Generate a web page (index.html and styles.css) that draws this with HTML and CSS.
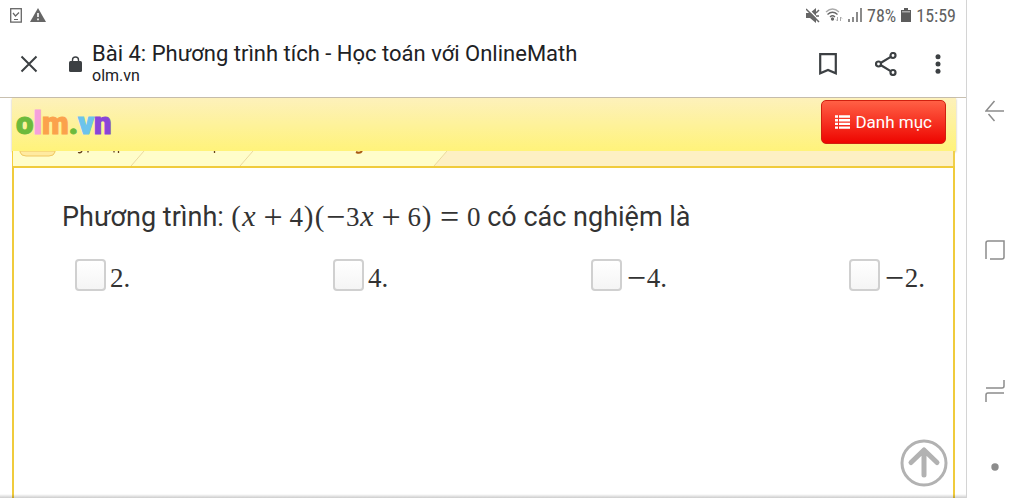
FILE: index.html
```html
<!DOCTYPE html>
<html lang="vi">
<head>
  <meta charset="UTF-8">
  <title>Bài 4: Phương trình tích - Học toán với OnlineMath</title>
  <meta name="viewport" content="width=device-width, initial-scale=1.0">
  <link rel="stylesheet" href="styles.css">
</head>
<body>
  <div class="screen">
    <div class="status">
      <svg width="12" height="15" viewBox="0 0 12 15" fill="none" stroke="#666"><rect x=".7" y=".7" width="10.6" height="13.4" stroke-width="1.3"/><path d="M3 5l2.5 3L9 4.500M4 11.500h4" stroke-width="1.200"/></svg>
      <svg width="16" height="14" viewBox="0 0 16 14"><path d="M8 0l8 14H0z" fill="#666"/><path d="M8 5v4M8 10.500v1.700" stroke="#fff" stroke-width="1.600"/></svg>
      <div class="status-right">
        <svg width="14" height="15" viewBox="0 0 14 15"><path d="M0 5h4l6-5v15l-6-5H0z" fill="#666"/><path d="M1 0l13 13" stroke="#fff" stroke-width="1.500"/><path d="M0 1l13 13M10 5l3-3M10 8h3" stroke="#666" stroke-width="1.500"/></svg>
        <svg class="wifi" width="18" height="14" viewBox="0 0 18 14" fill="none" stroke="#666" stroke-width="1.300"><path d="M1 4q6.500-6 13 0" stroke="#aaa"/><path d="M2.500 6.500q5-4.500 10 0M5 9q2.500-2.500 5 0"/><circle cx="7.500" cy="11" r="1" fill="#666"/><path d="M12.500 9v4l-1.500-1.500M15.500 13V9l1.500 1.500" stroke="#aaa" stroke-width="1"/></svg>
        <svg width="14" height="14" viewBox="0 0 14 14" stroke="#666" stroke-width="1.500"><path d="M1 14v-3M5 14V9M9 14V4M13 14V0"/></svg>
        <span>78%</span>
        <svg width="10" height="14" viewBox="0 0 10 14"><path d="M3 0h4v2h3v12H0V2h3z" fill="#5c5c5c"/><path d="M1 3h8v1.500H1z" fill="#aaa"/></svg>
        <span>15:59</span>
      </div>
    </div>
    <header class="toolbar">
      <button class="icon-btn" aria-label="Đóng">
        <svg width="18" height="18" viewBox="0 0 18 18"><path d="M1.500 1.500l15 15M16.500 1.500l-15 15" stroke="#3c4043" stroke-width="2"/></svg>
      </button>
      <svg class="lock" width="13" height="16" viewBox="0 0 13 16"><rect y="5" width="13" height="11" rx="1.500" fill="#3c4043"/><path d="M3.500 6V4a3 3 0 0 1 6 0v2" fill="none" stroke="#3c4043" stroke-width="1.400"/></svg>
      <div class="page-info">
        <div class="page-title">Bài 4: Phương trình tích - Học toán với OnlineMath</div>
        <div class="page-host">olm.vn</div>
      </div>
      <div class="actions">
        <button class="icon-btn" aria-label="Đánh dấu">
          <svg width="18" height="22" viewBox="0 0 18 22"><path d="M1.200 1.200h15.600V20.300L9 17l-7.800 3.300z" fill="none" stroke="#3c4043" stroke-width="2.200"/></svg>
        </button>
        <button class="icon-btn" aria-label="Chia sẻ">
          <svg width="22" height="24" viewBox="0 0 22 24" fill="none" stroke="#3c4043" stroke-width="2.200"><circle cx="3.500" cy="12" r="2.500"/><circle cx="18" cy="3.500" r="2.500"/><circle cx="18" cy="20.500" r="2.500"/><path d="M6 10.700l9.700-5.800M6 13.300l9.700 5.800"/></svg>
        </button>
        <button class="icon-btn" aria-label="Menu">
          <svg width="6" height="20" viewBox="0 0 6 20" fill="#3c4043"><circle cx="3" cy="2.700" r="2.500"/><circle cx="3" cy="10" r="2.500"/><circle cx="3" cy="17.300" r="2.500"/></svg>
        </button>
      </div>
    </header>

    <main class="site">
      <div class="site-header">
        <a class="logo" href="#"><span class="c-green">o</span><span class="c-pink">l</span><span class="c-orange">m</span><span class="c-green">.</span><span class="c-blue">v</span><span class="c-purple">n</span></a>
        <button class="menu-btn">
          <svg width="15" height="14" viewBox="0 0 15 14" stroke="#fff" stroke-width="2.400"><path d="M0 1.500h3M4 1.500h11M0 5.200h3M4 5.200h11M0 8.900h3M4 8.900h11M0 12.600h3M4 12.600h11"/></svg>
          Danh mục
        </button>
      </div>
      <div class="crumbs">
        <svg width="434" height="15" viewBox="0 0 434 15">
          <path d="M0 0h434l-13 15H0z" fill="#fffdca"/>
          <path d="M131 0l-13 15M240 0l-13 15M434 0l-13 15" stroke="#ead9a0" fill="none"/>
          <path d="M7 0v1q1 4 6 4h23q5 0 6-4V0z" fill="#ffeaa0" stroke="#f0c860"/>
          <path d="M65 1.500q3 1 4-1.500M75 0v1.500M101 0v1.500M105.500 0v2M201.500 0v2" stroke="#65401c" stroke-width="1.300" fill="none"/>
          <path d="M343 1q4 2 6-1" stroke="#a85a14" stroke-width="2" fill="none"/>
        </svg>
      </div>
      <div class="content">
        <p class="question">Phương trình: <span class="math"><span class="paren">(</span><i>x</i><b class="bin">+</b>4<span class="paren">)</span><span class="paren">(</span><b>−</b>3<i>x</i><b class="bin">+</b>6<span class="paren">)</span><b class="rel">=</b>0</span> có các nghiệm là</p>
        <div class="answers">
          <label><input type="checkbox"><span class="math">2.</span></label>
          <label><input type="checkbox"><span class="math">4.</span></label>
          <label><input type="checkbox"><span class="math"><b>−</b>4.</span></label>
          <label><input type="checkbox"><span class="math"><b>−</b>2.</span></label>
        </div>
      </div>
      <button class="to-top" aria-label="Lên đầu trang">
        <svg width="48" height="48" viewBox="0 0 48 48" fill="none" stroke="#b2b2b2"><circle cx="24" cy="24" r="22" stroke-width="3"/><path d="M24 36V11M11 23.500L24 11l13 12.500" stroke-width="5" stroke-linecap="round" stroke-linejoin="round"/></svg>
      </button>
    </main>
  </div>

  <nav class="nav-keys">
    <button class="icon-btn" aria-label="Quay lại">
      <svg width="20" height="22" viewBox="0 0 20 22" fill="none" stroke="#8c8c8c" stroke-width="1.500"><path d="M9.500 1L1 11h18M3.500 14l6 7"/></svg>
    </button>
    <button class="icon-btn" aria-label="Màn hình chính">
      <svg width="20" height="20" viewBox="0 0 20 20" fill="none" stroke="#8c8c8c" stroke-width="1.500"><path d="M1 19V3q0-2 2-2h16v16q0 2-2 2H5"/></svg>
    </button>
    <button class="icon-btn" aria-label="Gần đây">
      <svg width="20" height="24" viewBox="0 0 20 24" fill="none" stroke="#8c8c8c" stroke-width="1.500"><path d="M19 1v6q0 2-2 2H1M1 23v-7q0-2 2-2h16"/></svg>
    </button>
    <button class="icon-btn" aria-label="Ẩn thanh">
      <svg width="8" height="8" viewBox="0 0 8 8"><circle cx="4" cy="4" r="3.700" fill="#8c8c8c"/></svg>
    </button>
  </nav>
</body>
</html>
```

FILE: styles.css
```css
* { box-sizing: border-box; }
body { margin: 0; min-height: 100vh; display: flex; font-family: Roboto, sans-serif; background: #fff; color: #333; }
svg { display: block; flex-shrink: 0; }
button { font-family: inherit; }
.icon-btn { padding: 0; border: none; background: none; }

.screen { flex: 1; display: flex; flex-direction: column; border-right: 1px solid #d4d4d4; }

.status { display: flex; align-items: center; gap: 8px; height: 30px; padding: 0 10px; color: #606060; }
.status-right { display: flex; align-items: center; gap: 5px; margin-left: auto; font-family: "Roboto Condensed", Roboto, sans-serif; font-size: 18px; }

.toolbar { display: flex; align-items: center; height: 68px; padding: 0 25px 0 20px; border-bottom: 1px solid #c8c0b0; }
.lock { margin-left: 31px; }
.page-info { margin-left: 10px; color: #202124; }
.page-title { font-size: 22px; line-height: 24px; }
.page-host { font-size: 16px; line-height: 20px; }
.actions { display: flex; align-items: center; gap: 38px; margin-left: auto; }

.site { flex: 1; display: flex; flex-direction: column; position: relative; padding: 0 11px 0 12px; }
.site::after { content: ""; position: absolute; left: 0; right: 0; bottom: 0; height: 4px; background: linear-gradient(transparent, rgba(0,0,0,0.2)); }
.site-header { display: flex; align-items: center; justify-content: space-between; height: 53px; margin-right: -1px; padding: 0 10px 5px 4px; background: linear-gradient(#fdf1bb, #fff37a); box-shadow: 0 1px 2px rgba(120,90,0,0.4); }
.logo { padding-top: 4px; font-size: 31px; font-weight: 900; line-height: 32px; text-decoration: none; -webkit-text-stroke: 1px; }
.c-green { color: #6dba3c; }
.c-pink { color: #f5a0dc; }
.c-orange { color: #fba24c; }
.c-blue { color: #6cc3ec; }
.c-purple { color: #8a45d8; }
.menu-btn { display: flex; align-items: center; gap: 5px; height: 44px; padding: 0 13px; border: 1px solid #d02010; border-radius: 5px; background: linear-gradient(#ff6045, #ee0500); color: #fff; font-size: 17px; }

.crumbs { height: 15px; overflow: hidden; background: #fdf0c4; border-left: 1px solid #f5cf3e; border-right: 2px solid #f0cf4a; }
.content { flex: 1; padding: 31px 28px 0 48px; border: 2px solid #f0cb3c; border-bottom: none; }
.question { margin: 0; font-size: 27px; line-height: 36px; }
.math { font-family: "Liberation Serif", serif; font-size: 27px; white-space: nowrap; }
.math > * { display: inline-block; line-height: 26px; text-align: center; }
.math b { width: 21px; font-size: 34px; font-weight: normal; vertical-align: -2px; }
.math .bin { margin: 0 6px; }
.math .rel { margin: 0 7px; }
.math i { width: 15px; font-size: 30px; }
.math .paren { width: 11px; font-size: 29px; }
.answers { display: grid; grid-template-columns: repeat(3, 1fr) auto; margin: 24px 0 0 13px; }
.answers label { display: flex; align-items: center; gap: 4px; height: 32px; }
.answers .math { line-height: 32px; padding-top: 5px; }
.answers input { appearance: none; width: 31px; height: 32px; margin: 0; border: 2px solid #d0d0d0; border-radius: 4px; background: linear-gradient(#fff, #f5f5f5); }

.to-top { position: absolute; right: 18px; bottom: 11px; padding: 0; border: none; background: none; }

.nav-keys { display: flex; flex-direction: column; align-items: center; justify-content: space-between; width: 57px; padding: 100px 2px 27px 0; }
.nav-keys .icon-btn:last-child { margin-top: -58px; }
```
